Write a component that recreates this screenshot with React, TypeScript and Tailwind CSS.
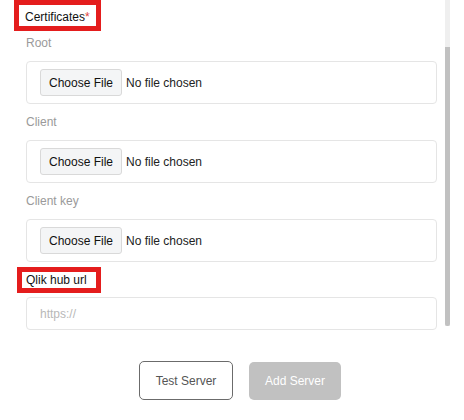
import React from "react";

function FileField({ label }: { label: string }) {
  return (
    <div>
      <div className="mt-[11px] mb-[11px] leading-[14px] text-[12px] text-[#9a9a9a]">{label}</div>
      <div className="h-[43px] w-[411px] border border-[#e5e5e5] rounded-[4px] flex items-center pl-[13px]">
        <button
          type="button"
          className="h-[27px] w-[82px] border border-[#d9d9d9] rounded-[3px] bg-[#f4f5f6] text-[12px] text-[#111] leading-none"
        >
          Choose File
        </button>
        <span className="ml-[4px] text-[12px] text-[#222]">No file chosen</span>
      </div>
    </div>
  );
}

export default function App() {
  return (
    <div
      className="relative w-[464px] h-[420px] bg-white overflow-hidden"
      style={{ fontFamily: '"Liberation Sans", Arial, sans-serif' }}
    >
      <div className="pl-[26px]">
        <div className="inline-block -ml-[12px] border-[5px] border-[#e41d1d] pt-[5px] pb-[2px] pl-[6px] pr-[6px] leading-[14px] text-[12px] text-[#111]">
          Certificates<span className="text-[#e0463c]">*</span>
        </div>
        <div className="-mt-[6px]">
          <FileField label="Root" />
          <FileField label="Client" />
          <FileField label="Client key" />
        </div>
        <div className="mt-[5px] mb-[4px]">
          <div className="inline-block -ml-[9px] border-[5px] border-[#e41d1d] py-[1px] pl-[4px] pr-[9px] leading-[14px] text-[12px] text-[#111]">
            Qlik hub url
          </div>
        </div>
        <input
          type="text"
          placeholder="https://"
          className="block h-[33px] w-[411px] border border-[#e5e5e5] rounded-[4px] pl-[13px] text-[12px] text-[#222] placeholder:text-[#b8b8b8] outline-none"
        />
      </div>
      <div className="mt-[31px] flex justify-center items-end gap-[16px] pl-[16px]">
        <button
          type="button"
          className="h-[39px] w-[94px] border border-[#6b6b6b] rounded-[5px] bg-white text-[12px] text-[#555]"
        >
          Test Server
        </button>
        <button
          type="button"
          className="h-[38px] w-[92px] rounded-[5px] bg-[#c1c1c1] text-[12px] text-white"
        >
          Add Server
        </button>
      </div>
      <div className="absolute left-[445px] top-0 w-[5px] h-[326px] bg-[#efefef]">
        <div className="mt-[47px] h-[279px] bg-[#c1c1c1] rounded-b-[2px]" />
      </div>
    </div>
  );
}
